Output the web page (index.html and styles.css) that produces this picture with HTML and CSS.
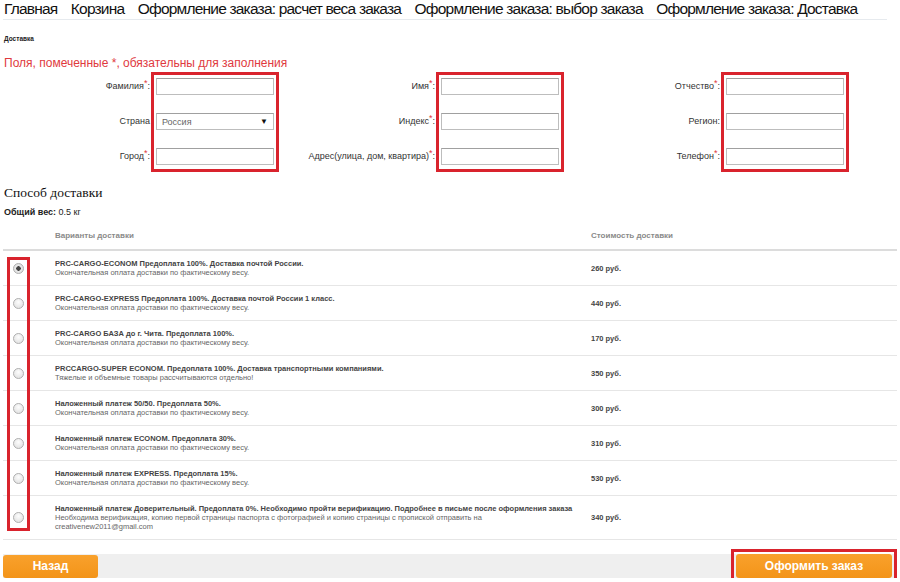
FILE: index.html
```html
<!DOCTYPE html>
<html lang="ru">
<head>
    <meta charset="UTF-8">
    <title>Оформление заказа: Доставка</title>
    <link rel="stylesheet" href="styles.css">
</head>
<body>
    <nav class="crumbs">
        <a href="#">Главная</a>
        <a href="#">Корзина</a>
        <a href="#">Оформление заказа: расчет веса заказа</a>
        <a href="#">Оформление заказа: выбор заказа</a>
        <a href="#">Оформление заказа: Доставка</a>
    </nav>

    <div class="page-title">Доставка</div>
    <p class="required-note">Поля, помеченные *, обязательны для заполнения</p>

    <div class="address-form">
        <div class="form-col">
            <div class="labels">
                <label>Фамилия<span class="req">*</span>:</label>
                <label>Страна</label>
                <label>Город<span class="req">*</span>:</label>
            </div>
            <div class="fields">
                <input type="text">
                <div class="select">Россия<span class="arrow">&#9660;</span></div>
                <input type="text">
            </div>
        </div>
        <div class="form-col">
            <div class="labels">
                <label>Имя<span class="req">*</span>:</label>
                <label>Индекс<span class="req">*</span>:</label>
                <label>Адрес(улица, дом, квартира)<span class="req">*</span>:</label>
            </div>
            <div class="fields">
                <input type="text">
                <input type="text">
                <input type="text">
            </div>
        </div>
        <div class="form-col">
            <div class="labels">
                <label>Отчество<span class="req">*</span>:</label>
                <label>Регион:</label>
                <label>Телефон<span class="req">*</span>:</label>
            </div>
            <div class="fields">
                <input type="text">
                <input type="text">
                <input type="text">
            </div>
        </div>
    </div>

    <h2 class="section-title">Способ доставки</h2>
    <div class="weight"><b>Общий вес:</b> 0.5 кг</div>

    <div class="delivery">
        <table class="delivery-table">
            <thead>
                <tr>
                    <th class="col-radio"></th>
                    <th class="col-name">Варианты доставки</th>
                    <th class="col-price">Стоимость доставки</th>
                </tr>
            </thead>
            <tbody>
                <tr>
                    <td class="col-radio"><input type="radio" name="delivery" checked></td>
                    <td class="col-name"><b>PRC-CARGO-ECONOM Предоплата 100%. Доставка почтой России.</b><br>Окончательная оплата доставки по фактическому весу.</td>
                    <td class="col-price">260 руб.</td>
                </tr>
                <tr>
                    <td class="col-radio"><input type="radio" name="delivery"></td>
                    <td class="col-name"><b>PRC-CARGO-EXPRESS Предоплата 100%. Доставка почтой России 1 класс.</b><br>Окончательная оплата доставки по фактическому весу.</td>
                    <td class="col-price">440 руб.</td>
                </tr>
                <tr>
                    <td class="col-radio"><input type="radio" name="delivery"></td>
                    <td class="col-name"><b>PRC-CARGO БАЗА до г. Чита. Предоплата 100%.</b><br>Окончательная оплата доставки по фактическому весу.</td>
                    <td class="col-price">170 руб.</td>
                </tr>
                <tr>
                    <td class="col-radio"><input type="radio" name="delivery"></td>
                    <td class="col-name"><b>PRCCARGO-SUPER ECONOM. Предоплата 100%. Доставка транспортными компаниями.</b><br>Тяжелые и объемные товары рассчитываются отдельно!</td>
                    <td class="col-price">350 руб.</td>
                </tr>
                <tr>
                    <td class="col-radio"><input type="radio" name="delivery"></td>
                    <td class="col-name"><b>Наложенный платеж 50/50. Предоплата 50%.</b><br>Окончательная оплата доставки по фактическому весу.</td>
                    <td class="col-price">300 руб.</td>
                </tr>
                <tr>
                    <td class="col-radio"><input type="radio" name="delivery"></td>
                    <td class="col-name"><b>Наложенный платеж ECONOM. Предоплата 30%.</b><br>Окончательная оплата доставки по фактическому весу.</td>
                    <td class="col-price">310 руб.</td>
                </tr>
                <tr>
                    <td class="col-radio"><input type="radio" name="delivery"></td>
                    <td class="col-name"><b>Наложенный платеж EXPRESS. Предоплата 15%.</b><br>Окончательная оплата доставки по фактическому весу.</td>
                    <td class="col-price">530 руб.</td>
                </tr>
                <tr>
                    <td class="col-radio"><input type="radio" name="delivery"></td>
                    <td class="col-name"><b>Наложенный платеж Доверительный. Предоплата 0%. Необходимо пройти верификацию. Подробнее в письме после оформления заказа</b><br>Необходима верификация, копию первой страницы паспорта с фотографией и копию страницы с пропиской отправить на<br>creativenew2011@gmail.com</td>
                    <td class="col-price">340 руб.</td>
                </tr>
            </tbody>
        </table>
        <div class="radio-mark"></div>
    </div>

    <div class="actions">
        <button class="btn">Назад</button>
        <div class="submit-mark">
            <button class="btn btn-submit">Оформить заказ</button>
        </div>
    </div>
</body>
</html>
```

FILE: styles.css
```css
body {
    margin: 0;
    padding: 0 3px;
    font-family: "Liberation Sans", Arial, sans-serif;
    color: #333;
    background: #fff;
}

.crumbs {
    height: 19px;
    margin-right: 10px;
    border-bottom: 1px solid #e6eaee;
    white-space: nowrap;
}

.crumbs a {
    display: inline-block;
    margin: 0 8px 0 1px;
    font-size: 15.5px;
    letter-spacing: -0.8px;
    line-height: 18px;
    color: #111;
    text-decoration: none;
}

.page-title {
    margin-top: 14px;
    padding-left: 1px;
    font-size: 6.5px;
    font-weight: bold;
    line-height: 10px;
    color: #222;
}

.required-note {
    margin: 11px 0 1px 1px;
    font-size: 12px;
    line-height: 16px;
    color: #e0393e;
}

.address-form {
    display: flex;
}

.form-col {
    display: flex;
    width: 285px;
}

.labels {
    display: flex;
    flex-direction: column;
    gap: 18px;
    width: 147px;
    padding-top: 6px;
    padding-right: 1px;
    text-align: right;
}

.labels label {
    height: 17px;
    font-size: 9px;
    line-height: 17px;
    color: #333;
}

.req {
    color: #e0393e;
    position: relative;
    top: -3px;
}

.fields {
    display: flex;
    flex-direction: column;
    gap: 18px;
    width: 118px;
    padding: 3px 2px 4px 2px;
    border: 3px solid #d9232d;
}

.fields input,
.select {
    box-sizing: border-box;
    width: 118px;
    height: 17px;
    margin: 0;
    padding: 0 5px;
    border: 1px solid #bdbdbd;
    border-top-color: #a0a0a0;
    font-family: inherit;
    font-size: 9px;
    background: #fff;
}

.select {
    display: flex;
    align-items: center;
    justify-content: space-between;
    color: #666;
}

.select .arrow {
    font-size: 8px;
    color: #111;
}

.section-title {
    margin: 12px 0 0 1px;
    font-family: "Liberation Serif", "Times New Roman", serif;
    font-size: 13.5px;
    font-weight: normal;
    line-height: 18px;
    color: #111;
}

.weight {
    margin: 4px 0 0 1px;
    font-size: 9px;
    line-height: 12px;
    color: #222;
}

.delivery {
    position: relative;
}

.delivery-table {
    width: 100%;
    border-collapse: collapse;
    font-size: 7.5px;
    line-height: 9px;
}

.delivery-table th {
    padding: 12px 0 7px;
    font-size: 8px;
    line-height: 12px;
    font-weight: bold;
    color: #8a8a8a;
    text-align: left;
    border-bottom: 2px solid #dcdcdc;
}

.delivery-table td {
    padding: 8px 0 8px;
    vertical-align: middle;
    border-bottom: 1px solid #e6e6e6;
    color: #666;
}

.delivery-table td b {
    color: #444;
}

.col-radio {
    width: 52px;
}

.delivery-table td.col-radio {
    padding-left: 10px;
    width: 42px;
}

.col-name {
    width: 536px;
}

.delivery-table td.col-price {
    font-weight: bold;
    color: #444;
}

.delivery-table input[type="radio"] {
    -webkit-appearance: none;
    appearance: none;
    display: block;
    width: 11px;
    height: 11px;
    margin: 0;
    border: 1px solid #b0b0b0;
    border-radius: 50%;
    background: radial-gradient(circle at 50% 35%, #fdfdfd, #dcdcdc);
}

.delivery-table input[type="radio"]:checked {
    background: radial-gradient(circle, #444 0, #444 2px, #e9e9e9 2.5px, #d8d8d8 100%);
}

.radio-mark {
    position: absolute;
    left: 4px;
    top: 39px;
    width: 17px;
    height: 268px;
    border: 3px solid #d9232d;
}

.actions {
    display: flex;
    align-items: center;
    justify-content: space-between;
    height: 24px;
    margin-top: 14px;
    background: #efefef;
}

.btn {
    height: 23px;
    width: 95px;
    padding: 0;
    border: none;
    border-radius: 3px;
    background: linear-gradient(#f9a12c, #f39419);
    color: #fff;
    font-family: inherit;
    font-size: 12px;
    font-weight: bold;
    cursor: pointer;
}

.submit-mark {
    padding: 2px;
    border: 3px solid #d9232d;
}

.btn-submit {
    display: block;
    width: 156px;
    height: 24px;
}
```
